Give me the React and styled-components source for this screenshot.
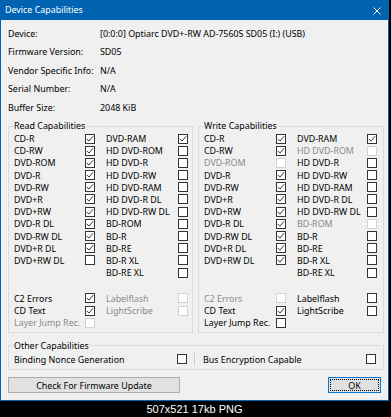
import React from 'react';
import styled, { createGlobalStyle } from 'styled-components';

const GlobalStyle = createGlobalStyle`
  html, body {
    margin: 0;
    padding: 0;
    background: #000;
  }
  body {
    font-family: 'Noto Sans', 'Open Sans', sans-serif;
    font-size: 8.9px;
    color: #000;
  }
`;

const Window = styled.div`
  width: 389px;
  height: 401px;
  box-sizing: border-box;
  border: 1px solid #0063b1;
  background: #f0f0f0;
  display: flex;
  flex-direction: column;
`;

const TitleBar = styled.div`
  height: 19px;
  background: #0063b1;
  color: #fff;
  display: flex;
  align-items: center;
  justify-content: space-between;
  padding: 0 7px 0 4px;
`;

const Title = styled.span`
  font-size: 8.9px;
  line-height: 1;
`;

const Body = styled.div`
  padding: 4px 4px 0 7px;
  display: flex;
  flex-direction: column;
`;

const InfoTable = styled.div`
  display: grid;
  grid-template-columns: 92px 1fr;
  grid-auto-rows: 18.5px;
  align-items: center;
`;

const Groups = styled.div`
  display: flex;
  gap: 5px;
  margin-top: 3.5px;
`;

const Group = styled.fieldset`
  margin: 0;
  min-width: 0;
  width: ${p => p.$width}px;
  box-sizing: border-box;
  border: 1px solid #dcdcdc;
  padding: 0 0 ${p => p.$bottom || 4}px 5px;
`;

const OtherGroup = styled(Group)`
  margin-top: 6.5px;
`;

const Legend = styled.legend`
  padding: 0 1px 0 0;
  line-height: 12px;
  height: 12px;
`;

const Columns = styled.div`
  display: flex;
  gap: 10px;
`;

const Column = styled.div`
  display: flex;
  flex-direction: column;
`;

const CapRow = styled.div`
  display: grid;
  grid-template-columns: ${p => p.$label}px 11px;
  height: 12.2px;
  align-items: center;
  white-space: nowrap;
  color: ${p => (p.$disabled ? '#8a8a8a' : '#000')};
`;

const Extras = styled.div`
  margin-top: 13.6px;
`;

const Box = styled.span`
  width: 10px;
  height: 10px;
  box-sizing: border-box;
  border: 1px solid ${p => (p.$disabled ? '#d2d2d2' : '#333')};
  background: #fff;
  display: flex;
  align-items: center;
  justify-content: center;
`;

const OtherRow = styled.div`
  display: flex;
  align-items: center;
  height: 12.2px;
  margin-top: 1px;
`;

const OtherCell = styled.div`
  display: grid;
  grid-template-columns: ${p => p.$label}px 10px;
  align-items: center;
`;

const Separator = styled.span`
  width: 1px;
  height: 14px;
  background: #cfcfcf;
  margin: 0 8px 0 7px;
`;

const ButtonRow = styled.div`
  display: flex;
  justify-content: space-between;
  margin-top: 7px;
  padding-right: 3px;
`;

const Button = styled.button`
  font: inherit;
  color: #000;
  width: ${p => p.$width}px;
  height: 16px;
  box-sizing: border-box;
  padding: 0;
  background: #e1e1e1;
  border: 1px solid ${p => (p.$default ? '#0078d7' : '#adadad')};
  display: flex;
  align-items: center;
  justify-content: center;
`;

const FocusRing = styled.span`
  flex: 1;
  align-self: stretch;
  margin: 1px;
  border: 1px dotted #000;
  display: flex;
  align-items: center;
  justify-content: center;
`;

const Caption = styled.div`
  width: 389px;
  height: 15px;
  display: flex;
  align-items: center;
  justify-content: center;
  color: #fff;
  font-family: 'Liberation Sans', Arial, sans-serif;
  font-size: 11px;
`;

const CheckBox = ({ checked, disabled }) => (
  <Box $disabled={disabled}>
    {checked && (
      <svg width="8" height="8" viewBox="0 0 8 8">
        <polyline points="0.8,3.9 2.9,6.1 7.2,1.2" fill="none" stroke="#333" strokeWidth="1" />
      </svg>
    )}
  </Box>
);

const CloseIcon = () => (
  <svg width="8" height="8" viewBox="0 0 8 8">
    <path d="M0.5 0.5 L7.5 7.5 M7.5 0.5 L0.5 7.5" stroke="#fff" strokeWidth="1" />
  </svg>
);

const info = [
  ['Device:', '[0:0:0] Optiarc DVD+-RW AD-7560S SD05 (I:) (USB)'],
  ['Firmware Version:', 'SD05'],
  ['Vendor Specific Info:', 'N/A'],
  ['Serial Number:', 'N/A'],
  ['Buffer Size:', '2048 KiB'],
];

const leftNames = ['CD-R', 'CD-RW', 'DVD-ROM', 'DVD-R', 'DVD-RW', 'DVD+R', 'DVD+RW', 'DVD-R DL', 'DVD-RW DL', 'DVD+R DL', 'DVD+RW DL'];
const rightNames = ['DVD-RAM', 'HD DVD-ROM', 'HD DVD-R', 'HD DVD-RW', 'HD DVD-RAM', 'HD DVD-R DL', 'HD DVD-RW DL', 'BD-ROM', 'BD-R', 'BD-RE', 'BD-R XL', 'BD-RE XL'];

// c = checked, d = disabled, - = empty
const readCaps = {
  left: 'cccccccccc-',
  right: 'c-----------',
  extraLeft: [['C2 Errors', 'c'], ['CD Text', 'c'], ['Layer Jump Rec.', 'd']],
  extraRight: [['Labelflash', 'd'], ['LightScribe', 'd']],
};

const writeCaps = {
  left: 'ccdcccccccc-',
  right: 'cd-----d----',
  extraLeft: [['C2 Errors', 'd'], ['CD Text', 'c'], ['Layer Jump Rec.', '-']],
  extraRight: [['Labelflash', '-'], ['LightScribe', '-']],
};

const Cap = ({ name, state, label }) => (
  <CapRow $label={label} $disabled={state === 'd'}>
    <span>{name}</span>
    <CheckBox checked={state === 'c'} disabled={state === 'd'} />
  </CapRow>
);

const CapGroup = ({ title, caps, width, leftLabel, rightLabel }) => (
  <Group $width={width} $bottom={4}>
    <Legend>{title}</Legend>
    <Columns>
      <Column>
        {leftNames.map((n, i) => (
          <Cap key={n} name={n} state={caps.left[i]} label={leftLabel} />
        ))}
      </Column>
      <Column>
        {rightNames.map((n, i) => (
          <Cap key={n} name={n} state={caps.right[i]} label={rightLabel} />
        ))}
      </Column>
    </Columns>
    <Extras>
      <Columns>
        <Column>
          {caps.extraLeft.map(([n, s]) => (
            <Cap key={n} name={n} state={s} label={leftLabel} />
          ))}
        </Column>
        <Column>
          {caps.extraRight.map(([n, s]) => (
            <Cap key={n} name={n} state={s} label={rightLabel} />
          ))}
        </Column>
      </Columns>
    </Extras>
  </Group>
);

const App = () => (
  <>
    <GlobalStyle />
    <Window>
      <TitleBar>
        <Title>Device Capabilities</Title>
        <CloseIcon />
      </TitleBar>
      <Body>
        <InfoTable>
          {info.map(([k, v]) => (
            <React.Fragment key={k}>
              <span>{k}</span>
              <span>{v}</span>
            </React.Fragment>
          ))}
        </InfoTable>
        <Groups>
          <CapGroup title="Read Capabilities" caps={readCaps} width={185} leftLabel={71} rightLabel={72} />
          <CapGroup title="Write Capabilities" caps={writeCaps} width={186} leftLabel={72} rightLabel={70} />
        </Groups>
        <OtherGroup $width={376} $bottom={4}>
          <Legend>Other Capabilities</Legend>
          <OtherRow>
            <OtherCell $label={163}>
              <span>Binding Nonce Generation</span>
              <CheckBox />
            </OtherCell>
            <Separator />
            <OtherCell $label={163}>
              <span>Bus Encryption Capable</span>
              <CheckBox />
            </OtherCell>
          </OtherRow>
        </OtherGroup>
        <ButtonRow>
          <Button $width={172}>Check For Firmware Update</Button>
          <Button $width={53} $default>
            <FocusRing>OK</FocusRing>
          </Button>
        </ButtonRow>
      </Body>
    </Window>
    <Caption>507x521 17kb PNG</Caption>
  </>
);

export default App;
